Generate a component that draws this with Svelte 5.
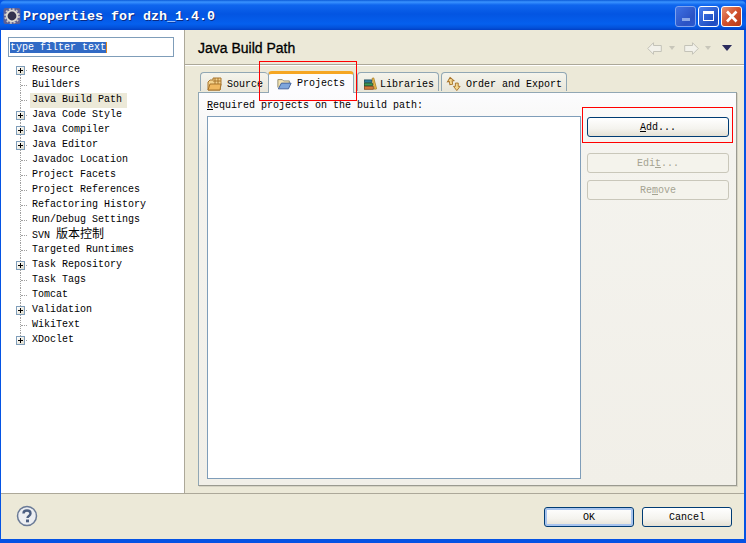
<script>
  const tree = [
    { t: 'Resource', plus: true },
    { t: 'Builders' },
    { t: 'Java Build Path', sel: true },
    { t: 'Java Code Style', plus: true },
    { t: 'Java Compiler', plus: true },
    { t: 'Java Editor', plus: true },
    { t: 'Javadoc Location' },
    { t: 'Project Facets' },
    { t: 'Project References' },
    { t: 'Refactoring History' },
    { t: 'Run/Debug Settings' },
    { t: 'SVN ', cjk: '版本控制' },
    { t: 'Targeted Runtimes' },
    { t: 'Task Repository', plus: true },
    { t: 'Task Tags' },
    { t: 'Tomcat' },
    { t: 'Validation', plus: true },
    { t: 'WikiText' },
    { t: 'XDoclet', plus: true, last: true }
  ];
</script>

<div class="window">
  <header class="titlebar">
    <svg class="appicon" width="18" height="18" viewBox="0 0 18 18">
      <rect x="0.500" y="1" width="17" height="16" rx="2" fill="#5c5f94"/>
      <circle cx="9" cy="9" r="7" fill="none" stroke="#cfccc6" stroke-width="1.600" stroke-dasharray="2 1.700"/>
      <circle cx="9" cy="9" r="5.300" fill="#33334e" stroke="#dedcd6" stroke-width="1.800"/>
    </svg>
    <span class="title">Properties for dzh_1.4.0</span>
    <div class="winbtns">
      <span class="wb minb"><i class="minglyph"></i></span>
      <span class="wb maxb"><i class="maxglyph"></i></span>
      <span class="wb closeb">
        <svg width="21" height="21" viewBox="0 0 21 21"><path d="M6 5.500l9.500 10M15.500 5.500L6 15.500" stroke="#fff" stroke-width="2.600" fill="none"/></svg>
      </span>
    </div>
  </header>

  <div class="client">
    <div class="main">
      <aside class="side">
        <div class="filter"><span class="seltext">type filter text</span></div>
        <ul class="tree">
          {#each tree as n}
            <li class="row" class:last={n.last}>
              {#if n.plus}
                <span class="plus"></span>
              {/if}
              <span class="dash"></span>
              <span class="label" class:sel={n.sel}>{n.t}{#if n.cjk}<span class="cjk">{n.cjk}</span>{/if}</span>
            </li>
          {/each}
        </ul>
      </aside>

      <section class="right">
        <div class="head">
          <h1>Java Build Path</h1>
          <div class="nav">
            <svg width="15" height="13" viewBox="0 0 15 13"><path d="M.7 6.500L6.500 .7V3.500h7.800v6H6.500v2.800z" fill="#f2f1ea" stroke="#c4c3b8"/></svg>
            <i class="tri grey"></i>
            <svg class="navfwd" width="15" height="13" viewBox="0 0 15 13"><path d="M14.300 6.500L8.500 .7V3.500H.7v6h7.800v2.800z" fill="#f2f1ea" stroke="#c4c3b8"/></svg>
            <i class="tri grey second"></i>
            <i class="tri dark"></i>
          </div>
        </div>

        <div class="folder">
          <div class="tabs">
            <div class="tab first">
              <svg width="16" height="16" viewBox="0 0 16 16"><path d="M1 14V6l2-2h3V2h8v6l-1 6z" fill="#f3d28e" stroke="#a8742c"/><path d="M8 2v6M11 2v6M6 5h8" stroke="#a8742c" fill="none"/><path d="M1 14l2-6h11l-1 6z" fill="#f0b860" stroke="#a8742c"/></svg>
              <span>Source</span>
            </div>
            <div class="tab active">
              <svg width="17" height="14" viewBox="0 0 17 14"><path d="M1 11V2h5l1.500 1.500H14V6" fill="#f4e4b4" stroke="#8a8468"/><path d="M1.500 12.500L5 6h11l-3 6.500z" fill="#7fa6dc" stroke="#3a5a96"/></svg>
              <span>Projects</span>
            </div>
            <div class="tab">
              <svg width="16" height="16" viewBox="0 0 16 16"><rect x="0.500" y="3" width="9" height="3" fill="#2f7f9a" stroke="#1c4a5c"/><rect x="0.500" y="7" width="10" height="3" fill="#3d9a54" stroke="#1e5a2c"/><rect x="0.500" y="11" width="11" height="3.500" fill="#d07838" stroke="#84461c"/><path d="M10 1l2-.5 3.500 13.500-2.500.5z" fill="#f0c050" stroke="#a87c20"/></svg>
              <span>Libraries</span>
            </div>
            <div class="tab">
              <svg width="17" height="16" viewBox="0 0 17 16"><path d="M4 1l3.500 4H5.500v3.500h-3V5H.5z" fill="#f4d890" stroke="#a8742c" transform="translate(1 0) rotate(-10 4 5)"/><path d="M11.500 15L8 10.500h2V7h3v3.500h2z" fill="#f4d890" stroke="#a8742c"/></svg>
              <span>Order and Export</span>
            </div>
          </div>

          <div class="panel">
            <div class="req"><u>R</u>equired projects on the build path:</div>
            <div class="panelbody">
              <div class="list"></div>
              <div class="buttons">
                <button class="btn focus"><u>A</u>dd...</button>
                <button class="btn dis" disabled>Edi<u>t</u>...</button>
                <button class="btn dis" disabled>Re<u>m</u>ove</button>
              </div>
            </div>
          </div>
        </div>
      </section>
    </div>

    <footer class="foot">
      <svg class="help" width="22" height="22" viewBox="0 0 22 22">
        <circle cx="11" cy="11" r="9.500" fill="#eceef2" stroke="#6a7a96" stroke-width="1.500"/>
        <path d="M7.500 8.500C7.500 6.500 9 5.500 11 5.500s3.500 1 3.500 3c0 2.600-3 2.400-3 4.500" fill="none" stroke="#4c5f82" stroke-width="2.400"/>
        <rect x="10" y="14.500" width="3" height="2.800" fill="#4c5f82"/>
      </svg>
      <div class="footbtns">
        <button class="btn def">OK</button>
        <button class="btn focus cancel">Cancel</button>
      </div>
    </footer>
  </div>

  <div class="mark markproj"></div>
  <div class="mark markadd"></div>
</div>

<style>
  :global(body) { margin: 0; background: #0a4fd8; }
  .window {
    position: relative;
    width: 746px;
    height: 543px;
    display: flex;
    flex-direction: column;
    overflow: hidden;
    font-family: "Liberation Mono", "Noto Sans CJK SC", monospace;
    font-size: 10px;
    color: #000;
    background: #0553e4;
  }
  .titlebar {
    height: 30px;
    flex: none;
    display: flex;
    align-items: center;
    padding: 2px 4px 0 3px;
    box-sizing: border-box;
    background: linear-gradient(#0b5ad8 0, #3a93ff 2px, #0f66ee 5px, #0355e2 14px, #0560ee 24px, #0350d8 28px, #013fc4 30px);
    border-radius: 6px 6px 0 0;
  }
  .appicon { flex: none; }
  .title {
    margin-left: 2px;
    font-weight: 700;
    font-size: 13.33px;
    color: #fff;
    text-shadow: 1px 1px 0 #0a2a80;
    white-space: nowrap;
  }
  .winbtns { margin-left: auto; display: flex; gap: 2px; }
  .wb {
    width: 21px;
    height: 21px;
    box-sizing: border-box;
    border: 1px solid #fff;
    border-radius: 3px;
    display: flex;
    align-items: center;
    justify-content: center;
  }
  .wb svg { display: block; margin: -1px; flex: none; }
  .minb { background: linear-gradient(135deg, #3f72e4, #2a52c4 70%, #2c5ad0); border-color: #7ea2ee; }
  .maxb { background: linear-gradient(135deg, #4a80ee, #1e4cc0 80%, #2a58d0); }
  .closeb { background: linear-gradient(135deg, #e89070, #d0502c 50%, #b83a18); }
  .minglyph { width: 8px; height: 3px; background: #8aa8e8; margin-top: 6px; }
  .maxglyph { width: 11px; height: 10px; box-sizing: border-box; border: 1px solid #fff; border-top-width: 3px; }

  .client {
    flex: 1;
    min-height: 0;
    margin: 0 2px 4px 1px;
    display: flex;
    flex-direction: column;
    background: #ece9d8;
  }
  .main { flex: 1; min-height: 0; display: flex; }
  .side {
    flex: none;
    box-sizing: border-box;
    background: #fff;
    border-right: 1px solid #aca899;
    width: 184px;
    padding: 7px 0 0 7px;
  }
  .filter {
    width: 166px;
    height: 20px;
    box-sizing: border-box;
    border: 1px solid #7f9db9;
    display: flex;
    align-items: center;
    padding-left: 1px;
  }
  .seltext {
    background: #316ac5;
    color: #fff;
    height: 11px;
    line-height: 11px;
    border-right: 1px solid #e08a20;
    white-space: nowrap;
  }
  .tree {
    list-style: none;
    margin: 6px 0 0 -7px;
    padding: 0;
  }
  .row {
    position: relative;
    height: 15px;
    display: flex;
    align-items: center;
    padding-left: 20px;
  }
  .row::before {
    content: "";
    position: absolute;
    left: 19px;
    top: 0;
    bottom: 0;
    border-left: 1px dotted #a0a0a0;
  }
  .row:first-child::before { top: 8px; }
  .row.last::before { bottom: 8px; }
  .dash {
    width: 6px;
    flex: none;
    border-top: 1px dotted #a0a0a0;
  }
  .plus {
    position: absolute;
    left: 15px;
    top: 3px;
    width: 9px;
    height: 9px;
    box-sizing: border-box;
    border: 1px solid #7f9db9;
    background:
      linear-gradient(#000, #000) center / 5px 1px no-repeat,
      linear-gradient(#000, #000) center / 1px 5px no-repeat,
      linear-gradient(135deg, #fff, #e0dccc);
    z-index: 1;
  }
  .label {
    padding: 0 5px 0 2px;
    margin-left: 3px;
    height: 15px;
    line-height: 14px;
    white-space: nowrap;
  }
  .label.sel { background: #ece9d8; }
  .cjk { font-size: 12px; }

  .right { flex: 1; min-width: 0; display: flex; flex-direction: column; }
  .head {
    height: 35px;
    flex: none;
    box-sizing: border-box;
    display: flex;
    align-items: center;
    padding: 2px 12px 0 13px;
    border-bottom: 1px solid #aca899;
    box-shadow: 0 1px 0 #fff;
  }
  h1 {
    margin: 0;
    font: 400 14px "Liberation Sans", sans-serif;
    -webkit-text-stroke: 0.3px #000;
    color: #000;
  }
  .nav { margin-left: auto; display: flex; align-items: center; }
  .nav svg { display: block; }
  .navfwd { margin-left: 9px; }
  .tri { width: 0; height: 0; display: block; border-style: solid; border-color: transparent; }
  .tri.grey { margin-left: 7px; border-width: 4px 3px 0; border-top-color: #c8c6ba; }
  .tri.grey.second { margin-left: 6px; }
  .tri.dark { margin-left: 11px; border-width: 6px 5px 0; border-top-color: #2a2a5c; }

  .folder {
    flex: 1;
    min-height: 0;
    display: flex;
    flex-direction: column;
    margin: 6px 7px 7px 13px;
  }
  .tabs {
    display: flex;
    align-items: flex-end;
    height: 21px;
    flex: none;
    padding-left: 2px;
    position: relative;
    z-index: 1;
  }
  .tab {
    height: 19px;
    margin-bottom: 1px;
    box-sizing: border-box;
    display: flex;
    align-items: center;
    gap: 4px;
    padding: 3px 4px 0 6px;
    margin-right: 2px;
    background: linear-gradient(#f5f4ec, #e8e6da);
    border: 1px solid #91a7b4;
    border-bottom: 0;
    border-radius: 4px 4px 0 0;
    white-space: nowrap;
  }
  .tab:not(.active) span { padding-top: 2px; }
  .tab.first { margin-right: 0; width: 68px; border-right: 0; }
  .tab.active {
    height: 22px;
    margin-bottom: -1px;
    margin-right: 3px;
    width: 86px;
    padding: 0 8px 0 8px;
    gap: 5px;
    background: #fcfcfe;
    border: 1px solid #91a7b4;
    border-top: 3px solid #f5a623;
    border-bottom: 0;
  }
  .tab:nth-child(3) { width: 82px; gap: 3px; }
  .tab:nth-child(4) { width: 126px; padding-left: 4px; gap: 4px; }
  .panel {
    flex: 1;
    min-height: 0;
    box-sizing: border-box;
    display: flex;
    flex-direction: column;
    padding: 7px 7px 6px 8px;
    background: linear-gradient(#fcfcfe 0, #f4f3ee 60px, #f1efe8);
    border: 1px solid #91a7b4;
    border-right-color: #9a9a90;
    border-bottom-color: #9a9a90;
    box-shadow: 1px 1px 0 #d6d3c4;
  }
  .req { height: 12px; line-height: 12px; flex: none; white-space: nowrap; }
  .panelbody { flex: 1; min-height: 0; display: flex; margin-top: 4px; }
  .list { width: 374px; box-sizing: border-box; background: #fff; border: 1px solid #7f9db9; flex: none; }
  .buttons { margin-left: 6px; display: flex; flex-direction: column; width: 142px; padding-top: 1px; }
  .btn {
    display: block;
    box-sizing: border-box;
    height: 20px;
    width: 142px;
    padding: 0;
    font: inherit;
    text-align: center;
    color: #000;
    border: 1px solid #003c74;
    border-radius: 3px;
    background: linear-gradient(#fff, #f4f3ee 60%, #e4e1d4);
  }
  .btn.dis {
    color: #a5a392;
    border-color: #c9c7ba;
    background: #f4f3ec;
    margin-top: 7px;
  }
  .btn.dis:nth-child(2) { margin-top: 16px; }
  .foot {
    height: 46px;
    flex: none;
    box-sizing: border-box;
    display: flex;
    align-items: center;
    padding: 0 12px 0 15px;
    border-top: 1px solid #aca899;
  }
  .help { display: block; flex: none; margin-top: -1px; }
  .footbtns { margin-left: auto; display: flex; gap: 8px; margin-top: 1px; }
  .footbtns .btn { width: 90px; }
  .footbtns .def { box-shadow: inset 0 0 0 2px #a8c4ee; }
  .mark { position: absolute; box-sizing: border-box; border: 1px solid #f00; pointer-events: none; z-index: 3; }
  .markproj { left: 259px; top: 61px; width: 98px; height: 40px; }
  .markadd { left: 582px; top: 107px; width: 151px; height: 36px; }
</style>
